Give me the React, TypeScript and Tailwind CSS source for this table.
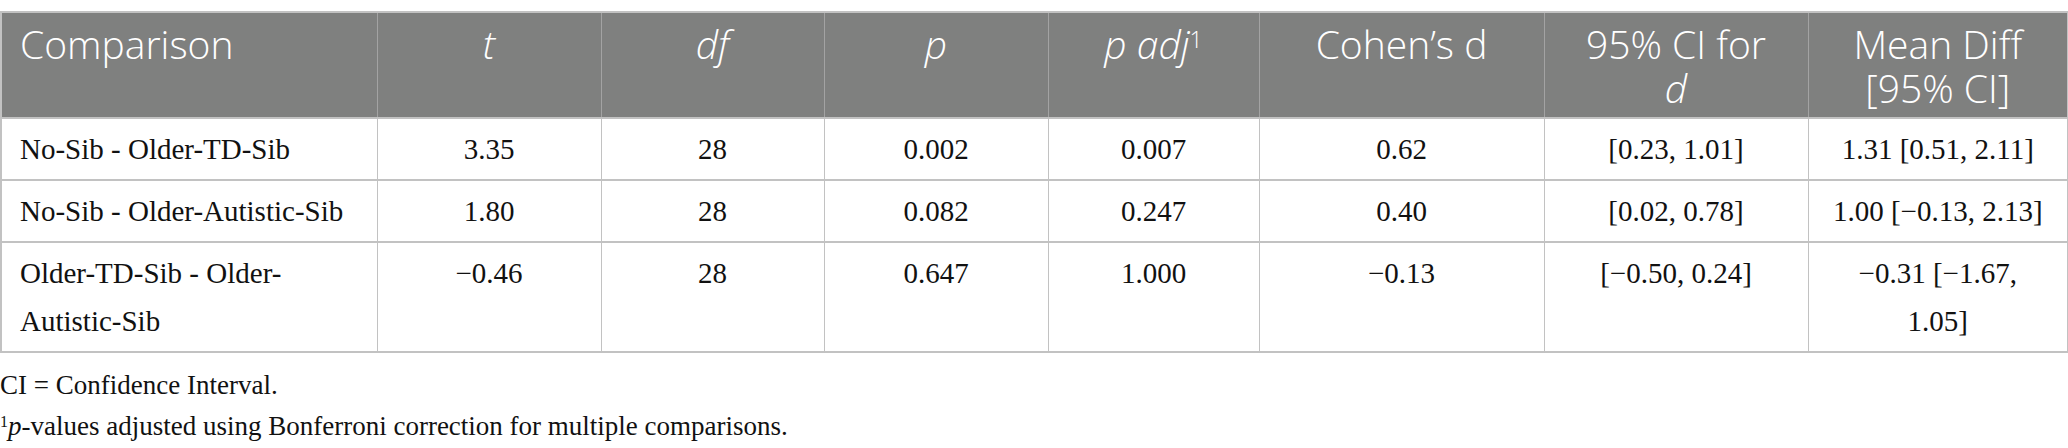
const rows = [
  {
    comparison: 'No-Sib - Older-TD-Sib',
    t: '3.35',
    df: '28',
    p: '0.002',
    padj: '0.007',
    d: '0.62',
    ci: '[0.23, 1.01]',
    diff: '1.31 [0.51, 2.11]',
  },
  {
    comparison: 'No-Sib - Older-Autistic-Sib',
    t: '1.80',
    df: '28',
    p: '0.082',
    padj: '0.247',
    d: '0.40',
    ci: '[0.02, 0.78]',
    diff: '1.00 [\u22120.13, 2.13]',
  },
  {
    comparison: 'Older-TD-Sib - Older-Autistic-Sib',
    t: '\u22120.46',
    df: '28',
    p: '0.647',
    padj: '1.000',
    d: '\u22120.13',
    ci: '[\u22120.50, 0.24]',
    diff: '\u22120.31 [\u22121.67, 1.05]',
  },
];

const th =
  "bg-[#7f807f] text-white font-['Open_Sans',sans-serif] font-light text-[39px] leading-[44px] px-[18px] pt-[9px] pb-[7px] align-top text-center border-x border-[#a3a3a3]";
const td =
  "font-['Liberation_Serif',serif] text-[29px] leading-[48px] text-[#111] px-[18px] py-[6px] align-top text-center border border-[#c2c2c2]";

export default function App() {
  return (
    <div className="w-[2068px] h-[448px] bg-white overflow-hidden">
      <table className="mt-[11px] w-[2067px] table-fixed border-collapse border-2 border-[#c2c2c2]">
        <colgroup>
          <col className="w-[376px]" />
          <col className="w-[224px]" />
          <col className="w-[223px]" />
          <col className="w-[224px]" />
          <col className="w-[211px]" />
          <col className="w-[285px]" />
          <col className="w-[264px]" />
          <col className="w-[260px]" />
        </colgroup>
        <thead>
          <tr className="border-b-2 border-[#c2c2c2]">
            <th className={`${th} !text-left`}>Comparison</th>
            <th className={th}>
              <i>t</i>
            </th>
            <th className={th}>
              <i>df</i>
            </th>
            <th className={th}>
              <i>p</i>
            </th>
            <th className={th}>
              <i>p adj</i>
              <sup className="text-[23px] font-light">1</sup>
            </th>
            <th className={th}>Cohen’s d</th>
            <th className={th}>
              95% CI for
              <br />
              <i>d</i>
            </th>
            <th className={th}>
              Mean Diff
              <br />
              [95% CI]
            </th>
          </tr>
        </thead>
        <tbody>
          {rows.map((r) => (
            <tr key={r.comparison} className="border-b-2 border-[#c2c2c2]">
              <td className={`${td} !text-left`}>{r.comparison}</td>
              <td className={td}>{r.t}</td>
              <td className={td}>{r.df}</td>
              <td className={td}>{r.p}</td>
              <td className={td}>{r.padj}</td>
              <td className={td}>{r.d}</td>
              <td className={td}>{r.ci}</td>
              <td className={`${td} !px-[20px]`}>{r.diff}</td>
            </tr>
          ))}
        </tbody>
      </table>

      {/* Footnotes */}
      <div className="mt-[12px] font-['Liberation_Serif',serif] text-[27px] leading-[41px] text-[#111]">
        <p>CI = Confidence Interval.</p>
        <p>
          <sup className="text-[16px]">1</sup>
          <i>p</i>-values adjusted using Bonferroni correction for multiple comparisons.
        </p>
      </div>
    </div>
  );
}
